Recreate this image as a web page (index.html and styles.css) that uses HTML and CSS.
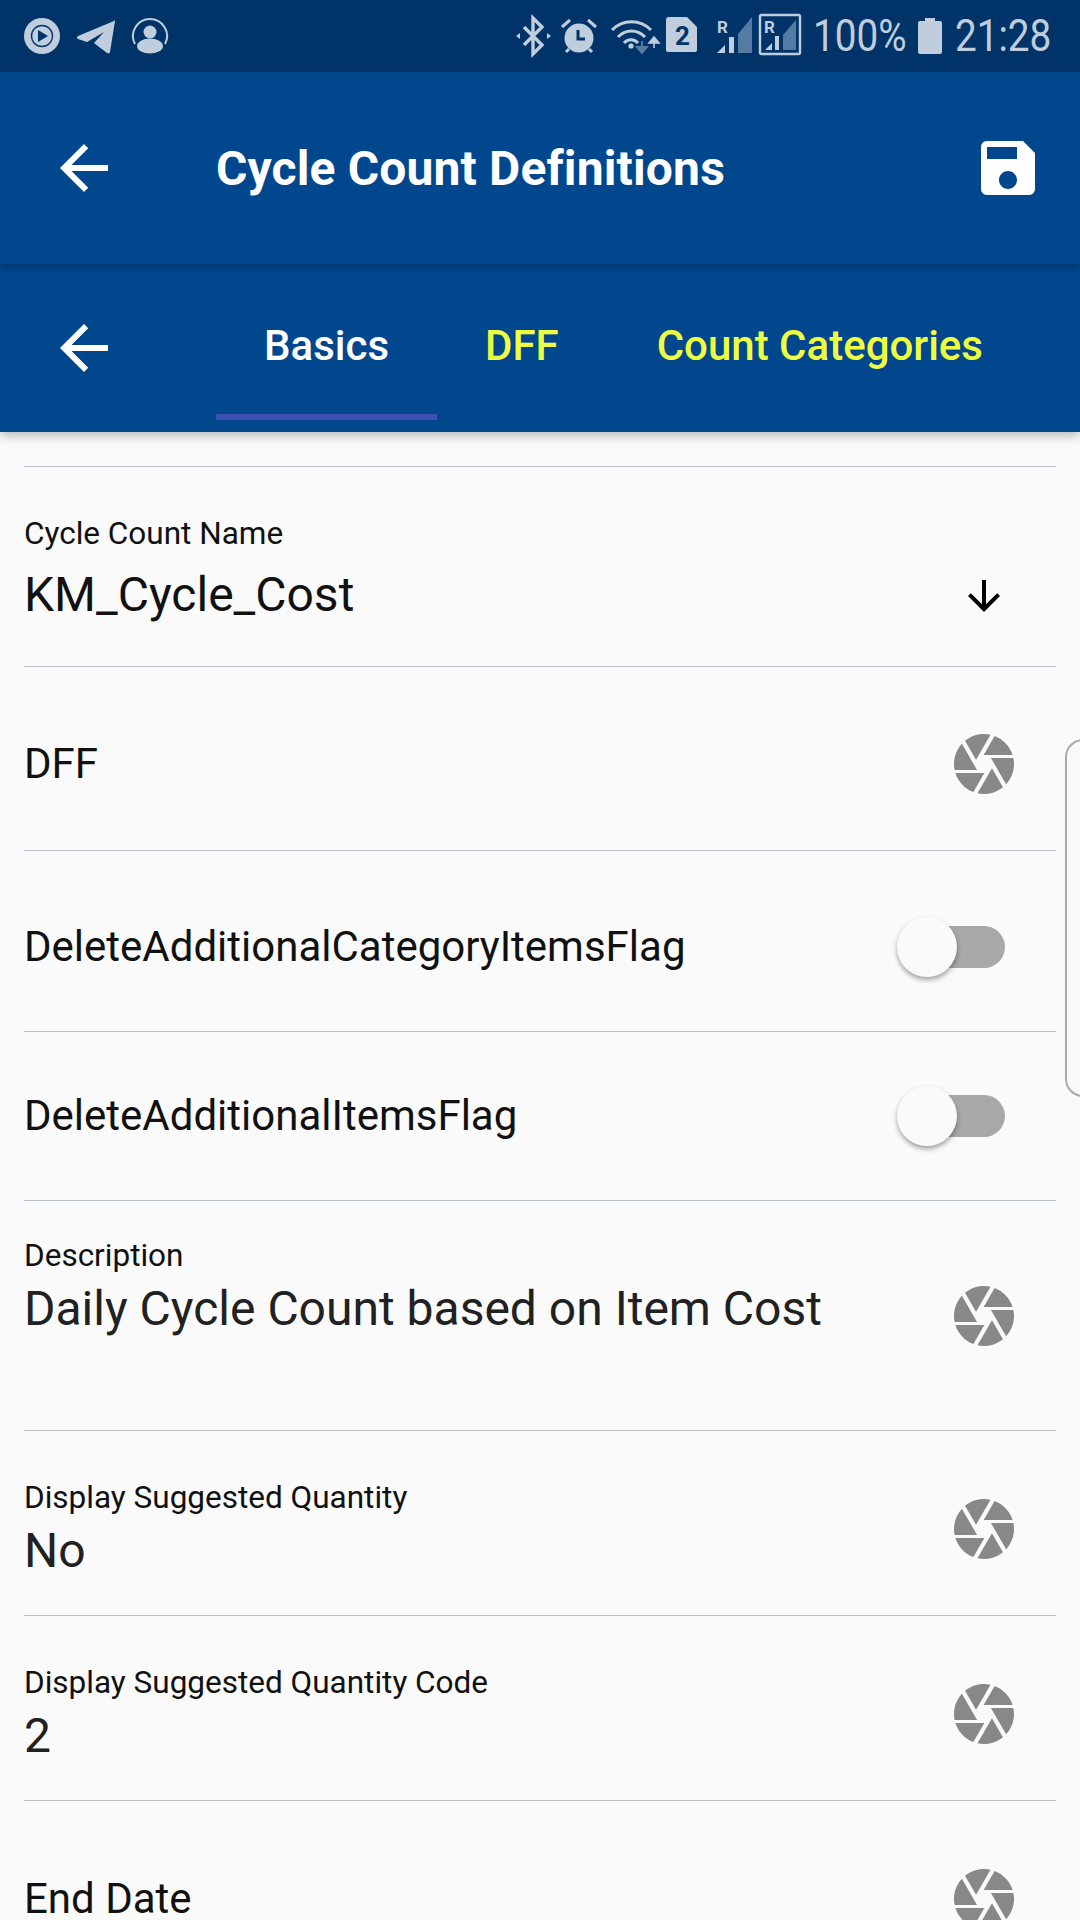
FILE: index.html
```html
<!DOCTYPE html>
<html lang="en">
<head>
    <meta charset="UTF-8">
    <meta name="viewport" content="width=device-width, initial-scale=1.0">
    <title>Cycle Count Definitions</title>
    <link rel="stylesheet" href="styles.css">
</head>
<body>
<svg width="0" height="0" class="defs">
    <symbol id="aperture" viewBox="0 0 24 24">
        <path d="M9.4 10.5l4.77-8.26C13.47 2.09 12.75 2 12 2c-2.4 0-4.6.85-6.32 2.25l3.66 6.35.06-.1zM21.54 9c-.92-2.92-3.15-5.26-6-6.34L11.88 9h9.66zm.26 1h-7.49l.29.5 4.76 8.25C21 16.97 22 14.61 22 12c0-.69-.07-1.35-.2-2zM8.54 12l-3.9-6.75C3.01 7.03 2 9.39 2 12c0 .69.07 1.35.2 2h7.49l-1.15-2zm-6.08 3c.92 2.92 3.15 5.26 6 6.34L12.12 15H2.46zm11.27 0l-3.9 6.76c.7.15 1.42.24 2.17.24 2.4 0 4.6-.85 6.32-2.25l-3.66-6.35-.93 1.6z"/>
    </symbol>
    <symbol id="back" viewBox="0 0 24 24">
        <path d="M20 11H7.83l5.59-5.59L12 4l-8 8 8 8 1.41-1.41L7.83 13H20v-2z"/>
    </symbol>
</svg>

<div class="status-bar">
    <svg class="status-left" width="180" height="72" viewBox="0 0 180 72">
        <circle cx="42" cy="36" r="18" fill="#bfcddd"/>
        <circle cx="42" cy="36" r="10.5" fill="none" stroke="#003468" stroke-width="1.3"/>
        <path d="M38 30l10 6-10 6z" fill="#003468"/>
        <path d="M114 21L78 36q-2 2 0 3l9 3 17-10-10 11 13 10q3 1 3-1l5-31q0-1-1-.5z" fill="#bfcddd"/>
        <path d="M135 44a17 17 0 1 1 30 0" fill="none" stroke="#bfcddd" stroke-width="2"/>
        <circle cx="150" cy="32" r="6.5" fill="#bfcddd"/>
        <ellipse cx="150" cy="46" rx="13" ry="7.5" fill="#bfcddd"/>
    </svg>
    <div class="status-right">
        <svg width="295" height="72" viewBox="510 0 295 72">
            <!-- bluetooth -->
            <path d="M524 27l18 18-9 9V18l9 9-18 18" fill="none" stroke="#bfcddd" stroke-width="3.4"/>
            <path d="M516 36l4-3v6zM551 36l-4-3v6z" fill="#bfcddd"/>
            <!-- alarm -->
            <circle cx="579" cy="38" r="14.5" fill="#bfcddd"/>
            <path d="M562 27l8-7M596 27l-8-7M566 52l3-3M592 52l-3-3" stroke="#bfcddd" stroke-width="3"/>
            <path d="M578 30v9h7" fill="none" stroke="#003468" stroke-width="3"/>
            <!-- wifi -->
            <path d="M612 30a27 27 0 0 1 39 0M618 37a18 18 0 0 1 27 0M624 43a9 9 0 0 1 14 0" fill="none" stroke="#bfcddd" stroke-width="3"/>
            <circle cx="631" cy="46" r="2.6" fill="#bfcddd"/>
            <path d="M642 41v8M637 47l5 6 5-6z" fill="#557ba3" stroke="#557ba3" stroke-width="2"/>
            <path d="M654 48v-7M649 43l5-6 5 6z" fill="#bfcddd" stroke="#bfcddd" stroke-width="1.6"/>
            <!-- sim 2 -->
            <path d="M669 17h18l10 10v23q0 2-2 2h-26q-3 0-3-2V20q0-3 3-3z" fill="#bfcddd"/>
            <text x="675" y="45" class="sim-num">2</text>
            <!-- signal -->
            <text x="717" y="33" class="sig-r">R</text>
            <path d="M717 53l8-8v8zM729 37h5v16h-5z" fill="#bfcddd"/>
            <path d="M738 34l14-17v36h-14z" fill="#557ba3"/>
            <rect x="760" y="15" width="40" height="39" rx="1.5" fill="none" stroke="#bfcddd" stroke-width="2.4"/>
            <text x="764" y="33" class="sig-r">R</text>
            <path d="M765 50l7-7v7zM775 36h4v14h-4z" fill="#bfcddd"/>
            <path d="M783 35l13-15v30h-13z" fill="#557ba3"/>
        </svg>
        <span class="status-text percent">100%</span>
        <svg class="battery" width="24" height="36" viewBox="0 0 24 36">
            <path d="M7 0h10v3h5q2 0 2 2v29q0 2-2 2H2q-2 0-2-2V5q0-2 2-2h5z" fill="#bfcddd"/>
        </svg>
        <span class="status-text clock">21:28</span>
    </div>
</div>

<header class="app-bar">
    <svg class="icon-back"><use href="#back"/></svg>
    <h1 class="title">Cycle Count Definitions</h1>
    <svg class="icon-save" viewBox="0 0 24 24">
        <path d="M17 3H5c-1.11 0-2 .9-2 2v14c0 1.1.89 2 2 2h14c1.1 0 2-.9 2-2V7l-4-4zm-5 16c-1.66 0-3-1.34-3-3s1.34-3 3-3 3 1.34 3 3-1.34 3-3 3zm3-10H5V5h10v4z"/>
    </svg>
</header>

<nav class="tab-bar">
    <svg class="icon-back"><use href="#back"/></svg>
    <div class="tabs">
        <div class="tab active">Basics</div>
        <div class="tab">DFF</div>
        <div class="tab tab-last">Count Categories</div>
    </div>
</nav>

<div class="list">
    <div class="row row-name">
        <div class="field field-top field-name">
            <div class="label">Cycle Count Name</div>
            <div class="value value-wide">KM_Cycle_Cost</div>
        </div>
        <svg class="icon-down" viewBox="0 0 24 24">
            <path d="M20 12l-1.41-1.41L13 16.17V4h-2v12.17l-5.58-5.59L4 12l8 8 8-8z"/>
        </svg>
    </div>
    <div class="row row-std row-dff">
        <div class="plain">DFF</div>
        <svg class="icon-aperture"><use href="#aperture"/></svg>
    </div>
    <div class="row row-flag-a">
        <div class="plain">DeleteAdditionalCategoryItemsFlag</div>
        <div class="switch"><div class="thumb"></div></div>
    </div>
    <div class="row row-flag-b">
        <div class="plain">DeleteAdditionalItemsFlag</div>
        <div class="switch"><div class="thumb"></div></div>
    </div>
    <div class="row row-desc">
        <div class="field field-top">
            <div class="label">Description</div>
            <div class="value">Daily Cycle Count based on Item Cost</div>
        </div>
        <svg class="icon-aperture"><use href="#aperture"/></svg>
    </div>
    <div class="row row-std">
        <div class="field">
            <div class="label">Display Suggested Quantity</div>
            <div class="value">No</div>
        </div>
        <svg class="icon-aperture"><use href="#aperture"/></svg>
    </div>
    <div class="row row-std">
        <div class="field">
            <div class="label">Display Suggested Quantity Code</div>
            <div class="value">2</div>
        </div>
        <svg class="icon-aperture"><use href="#aperture"/></svg>
    </div>
    <div class="row row-std">
        <div class="plain">End Date</div>
        <svg class="icon-aperture"><use href="#aperture"/></svg>
    </div>
</div>

<div class="edge-handle"></div>
</body>
</html>
```
FILE: styles.css
```css
html, body {
    margin: 0;
    padding: 0;
}

body {
    position: relative;
    width: 1080px;
    height: 1920px;
    overflow: hidden;
    background: #fafafa;
    font-family: Roboto, sans-serif;
}

.defs {
    position: absolute;
}

/* status bar */
.status-bar {
    display: flex;
    justify-content: space-between;
    height: 72px;
    background: #003468;
}

.status-right {
    display: flex;
    align-items: center;
}

.status-text {
    display: inline-block;
    font-size: 45px;
    line-height: 72px;
    color: #bfcddd;
    transform: scaleX(0.86);
    transform-origin: left center;
    white-space: nowrap;
}

.percent {
    width: 91px;
    margin-left: 8px;
}

.battery {
    margin-left: 14px;
}

.clock {
    width: 96px;
    margin-left: 13px;
    margin-right: 29px;
}

.sim-num {
    font-size: 26px;
    font-weight: 700;
    fill: #003468;
}

.sig-r {
    font-size: 17px;
    font-weight: 700;
    fill: #bfcddd;
}

/* app bar */
.app-bar {
    position: relative;
    z-index: 2;
    display: flex;
    align-items: center;
    height: 192px;
    background: #01478d;
    box-shadow: 0 3px 8px rgba(0, 0, 0, 0.25);
}

.icon-back {
    flex: none;
    width: 72px;
    height: 72px;
    margin-left: 48px;
    fill: #fff;
}

.title {
    flex: 1;
    margin: 0 0 0 96px;
    font-size: 48px;
    font-weight: 700;
    letter-spacing: 0.15px;
    color: #fff;
}

.icon-save {
    width: 72px;
    height: 72px;
    margin-right: 36px;
    fill: #fff;
}

/* tabs */
.tab-bar {
    position: relative;
    z-index: 1;
    display: flex;
    align-items: center;
    height: 168px;
    background: #01478d;
    box-shadow: 0 4px 10px rgba(0, 0, 0, 0.25);
}

.tabs {
    display: flex;
    align-self: flex-start;
    margin-left: 96px;
}

.tab {
    height: 156px;
    box-sizing: border-box;
    padding: 0 48px;
    font-size: 42px;
    font-weight: 500;
    line-height: 164px;
    color: #eeff41;
    white-space: nowrap;
}

.tab-last {
    margin-left: 2px;
}

.tab.active {
    color: #fff;
    border-bottom: 6px solid #3f51b5;
}

/* list */
.list {
    margin: 34px 24px 0;
    border-top: 1px solid #bbc2c9;
}

.row {
    display: flex;
    align-items: center;
    justify-content: space-between;
    box-sizing: border-box;
    padding-right: 36px;
    border-bottom: 1px solid #bbc2c9;
}

.row-std {
    height: 185px;
    padding-top: 12px;
}

.row-dff {
    height: 184px;
    padding-top: 10px;
}

.row-name {
    height: 200px;
    padding-top: 58px;
}

.row-flag-a {
    height: 181px;
    padding-top: 12px;
}

.row-flag-b {
    height: 169px;
}

.row-desc {
    height: 230px;
}

.field-top {
    align-self: flex-start;
    padding-top: 37px;
}

.field-name {
    margin-top: -58px;
    padding-top: 49px;
}

.label {
    font-size: 31.5px;
    line-height: 36px;
    color: #111;
}

.value {
    margin-top: 7px;
    font-size: 48px;
    line-height: 56px;
    color: #212121;
}

.value-wide {
    margin-top: 15px;
    color: #111;
}

.plain {
    font-size: 42px;
    line-height: 54px;
    color: #111;
}

.icon-aperture {
    flex: none;
    width: 72px;
    height: 72px;
    fill: #888;
}

.icon-down {
    flex: none;
    width: 48px;
    height: 48px;
    margin-right: 12px;
    fill: #000;
}

/* switch */
.switch {
    position: relative;
    width: 99px;
    height: 42px;
    margin-right: 15px;
    border-radius: 21px;
    background: #a8a8a8;
}

.thumb {
    position: absolute;
    top: -9px;
    left: -9px;
    width: 60px;
    height: 60px;
    border-radius: 50%;
    background: #fafafa;
    box-shadow: 0 3px 5px rgba(0, 0, 0, 0.35);
}

/* edge panel handle, lies over the page */
.edge-handle {
    position: absolute;
    top: 739px;
    left: 1065px;
    width: 40px;
    height: 358px;
    box-sizing: border-box;
    border: 2px solid #aaa;
    border-radius: 18px;
}
```
